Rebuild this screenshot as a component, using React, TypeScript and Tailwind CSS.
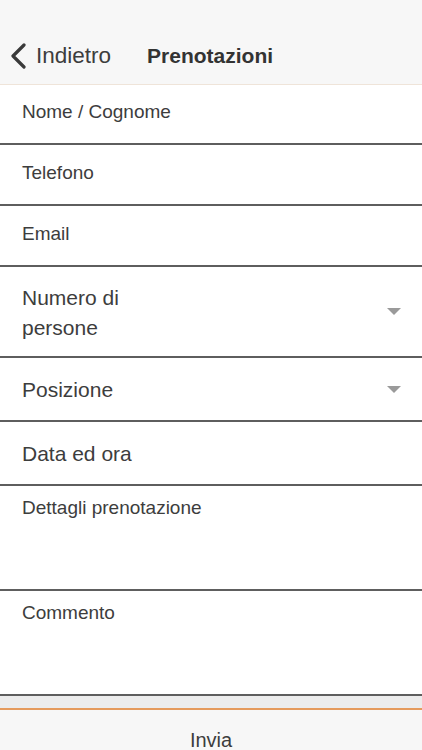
import React from "react";

function Arrow() {
    return (
        <svg width="14" height="7" viewBox="0 0 14 7" className="shrink-0">
            <path d="M0 0 L14 0 L7 7 Z" fill="#9a9a9a" />
        </svg>
    );
}

export default function App() {
    return (
        <div className="w-[422px] h-[750px] overflow-hidden bg-white text-[#3d3d3d] flex flex-col"
            style={{ fontFamily: '"Liberation Sans", Arial, sans-serif' }}>

            {/* header */}
            <div className="h-[85px] shrink-0 bg-[#f7f7f7] border-b border-[#efe4d9] flex items-start pt-[36px]">
                <div className="h-[40px] flex items-center">
                    <svg width="18" height="26" viewBox="0 0 18 26" className="ml-[9px]">
                        <path d="M15 2 L4 13 L15 24" fill="none" stroke="#3a3a3a" strokeWidth="3.2" strokeLinecap="round" strokeLinejoin="round" />
                    </svg>
                    <span className="ml-[9px] text-[22.5px]">Indietro</span>
                    <span className="ml-[36px] text-[21px] font-bold text-[#333]">Prenotazioni</span>
                </div>
            </div>

            {/* form */}
            <div className="h-[60px] shrink-0 border-b-2 border-[#5e5e5e] px-[22px] pt-[15px]">
                <p className="text-[19px] leading-[24px]">Nome / Cognome</p>
            </div>
            <div className="h-[61px] shrink-0 border-b-2 border-[#5e5e5e] px-[22px] pt-[16px]">
                <p className="text-[19px] leading-[24px]">Telefono</p>
            </div>
            <div className="h-[61px] shrink-0 border-b-2 border-[#5e5e5e] px-[22px] pt-[16px]">
                <p className="text-[19px] leading-[24px]">Email</p>
            </div>
            <div className="h-[91px] shrink-0 border-b-2 border-[#5e5e5e] pl-[22px] pr-[21px] flex items-center justify-between">
                <p className="text-[21px] leading-[30px] w-[160px] pt-[2px]">Numero di persone</p>
                <Arrow />
            </div>
            <div className="h-[64px] shrink-0 border-b-2 border-[#5e5e5e] pl-[22px] pr-[21px] flex items-center justify-between">
                <p className="text-[21px] leading-[30px] pt-[2px]">Posizione</p>
                <Arrow />
            </div>
            <div className="h-[64px] shrink-0 border-b-2 border-[#5e5e5e] px-[22px] flex items-center">
                <p className="text-[21px] leading-[30px] pt-[1px]">Data ed ora</p>
            </div>
            <div className="h-[105px] shrink-0 border-b-2 border-[#5e5e5e] px-[22px] pt-[10px]">
                <p className="text-[19px] leading-[24px]">Dettagli prenotazione</p>
            </div>
            <div className="h-[105px] shrink-0 border-b-2 border-[#5e5e5e] px-[22px] pt-[10px]">
                <p className="text-[19px] leading-[24px]">Commento</p>
            </div>

            {/* footer */}
            <div className="h-[12px] shrink-0 bg-[#ececec]" />
            <div className="flex-1 bg-[#f7f7f7] border-t-2 border-[#e59a5c] flex justify-center pt-[17px]">
                <span className="text-[20px] leading-[26px]">Invia</span>
            </div>
        </div>
    );
}
